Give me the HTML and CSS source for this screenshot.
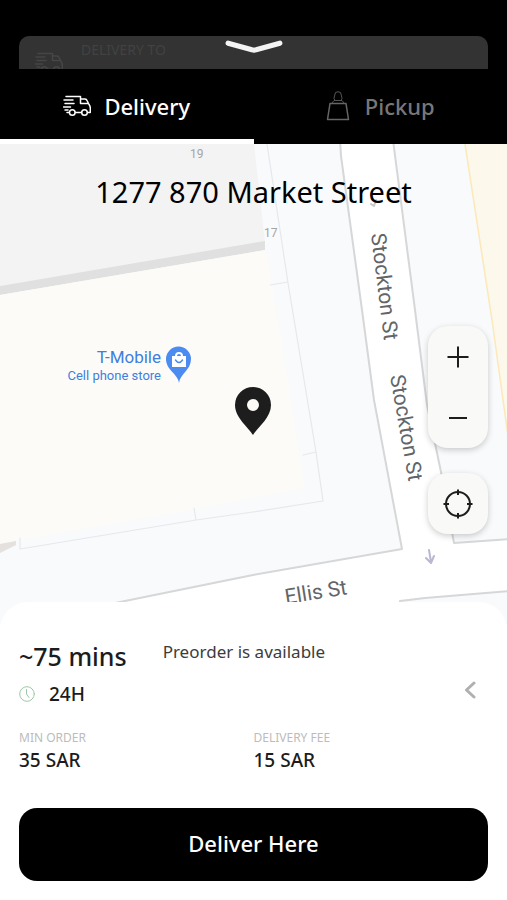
FILE: index.html
```
<!DOCTYPE html>
<html lang="en">
<head>
<meta charset="utf-8">
<meta name="viewport" content="width=device-width, initial-scale=1">
<title>Delivery location</title>
<link rel="stylesheet" href="styles.css">
</head>
<body>
<header class="top">
  <div class="peek">
    <svg class="peek-truck" viewBox="0 0 28 22" aria-hidden="true"><path d="M3 1.500H17.500V8.500H25.500M1 5H10M2 8.500H11M.5 12H7.500M2 15H5M4 17.500H6M17.500 4H22Q23.500 4 24.300 6L26 9.500Q27.300 11 27.300 13V17.500H25M12.500 17.500H18.500"/><circle cx="9.300" cy="17.500" r="2.800"/><circle cx="21.500" cy="17.500" r="2.800"/></svg>
    <span class="peek-label">DELIVERY TO</span>
    <button class="collapse" aria-label="Close"><svg viewBox="0 0 58 16" aria-hidden="true"><path d="M4 4 27 10.500Q29 11 31 10.500L54 4"/></svg></button>
  </div>
</header>
<nav class="tabs">
  <button class="tab active">
    <svg class="truck" viewBox="0 0 28 22" aria-hidden="true"><path d="M3 1.500H17.500V8.500H25.500M1 5H10M2 8.500H11M.5 12H7.500M2 15H5M4 17.500H6M17.500 4H22Q23.500 4 24.300 6L26 9.500Q27.300 11 27.300 13V17.500H25M12.500 17.500H18.500"/><circle cx="9.300" cy="17.500" r="2.800"/><circle cx="21.500" cy="17.500" r="2.800"/></svg>
    <span>Delivery</span>
  </button>
  <button class="tab">
    <svg class="bag" viewBox="0 0 24 30" aria-hidden="true"><path d="M4 12.500H20L22.500 28.500H1.500Z"/><path class="thin" d="M6 12 8 9.500H16L18 12M9 9.500Q7 8 8.500 5L9.500 1.500Q12 0 14.500 1.500L15.500 5Q17 8 15 9.500"/></svg>
    <span>Pickup</span>
  </button>
</nav>
<main>
  <section class="map" aria-label="Map">
    <svg class="map-art" viewBox="0 144 507 480" preserveAspectRatio="xMidYMin slice">
      <rect class="road" y="144" width="507" height="480"/>
      <path class="block" d="M-2 140H340L341 156 362 310 374 400 402 549 253 575 120 602-2 628Z"/>
      <path class="block" d="M393 140 415 310 427 405 441 472 454 543 510 539V140Z"/>
      <path class="block" d="M400 601 425 598 510 591V628H400Z"/>
      <path class="gray-lot" d="M0 144H254L265 242 0 286Z"/>
      <path class="gray-wall" d="M0 286 265 241V250L0 295Z"/>
      <path class="shop" d="M0 295 266 250 305 488 195 509 20 540 0 543Z"/>
      <path class="sand" d="M465 144H507V430L492 320Z"/>
      <path class="sand-line" d="M465 144 492 320 508 436"/>
      <path class="corner-lot" d="M0 544 16 541V545L0 553Z"/>
      <path class="lot-line" d="M267 144 288 283 316 452 323 501 253 512 196 520 20 549V538M270 285 288 282M194 508 196 520M303 455 316 452"/>
      <path class="number-tag" d="M371 204 374 206 376 200"/>
      <path class="arrow" d="M429 550 431 562M426 558 431 563 434 556"/>
      <g class="house-no"><text x="190" y="158">19</text><text x="264" y="237">17</text></g>
      <g class="street">
        <text transform="translate(371 234) rotate(83)">Stockton St</text>
        <text transform="translate(390 376) rotate(80)">Stockton St</text>
        <text transform="translate(286 604) rotate(-9)">Ellis St</text>
      </g>
      <g class="place"><text class="place-name" x="161" y="363">T-Mobile</text><text class="place-kind" x="161" y="380">Cell phone store</text></g>
      <path class="place-pin" d="M179 383C178 374 166 370 166 359A12.500 12.500 0 0 1 191 359C191 370 180 374 179 383Z"/>
      <path class="place-bag" d="M172 356H175Q175 352 179 352T183 356H186V367H172Z"/>
      <path class="place-hole" d="M177 356Q177 354 179 354T181 356Z"/>
      <path class="place-smile" d="M175.500 360Q179 365 182.500 360"/>
      <path class="pin" fill-rule="evenodd" d="M253 435C249 428 235 418 235 405A18 18 0 0 1 271 405C271 418 257 428 253 435ZM253 399A6 6 0 1 0 253 411A6 6 0 1 0 253 399Z"/>
    </svg>
    <h1 class="address">1277 870 Market Street</h1>
    <div class="controls">
      <div class="zoom">
        <button aria-label="Zoom in"><svg viewBox="0 0 24 24" aria-hidden="true"><path d="M12 1.500V22.500M1.500 12H22.500"/></svg></button>
        <button aria-label="Zoom out"><svg viewBox="0 0 24 24" aria-hidden="true"><path d="M3 12H21"/></svg></button>
      </div>
      <button class="locate" aria-label="My location"><svg viewBox="0 0 30 30" aria-hidden="true"><circle cx="15" cy="15" r="12"/><path d="M15 .5V6M15 24V29.500M.5 15H6M24 15H29.500"/></svg></button>
    </div>
  </section>
  <section class="sheet">
    <div class="summary">
      <div class="timing">
        <strong class="eta">~75 mins</strong>
        <span class="preorder">Preorder is available</span>
      </div>
      <div class="hours">
        <svg class="clock" viewBox="0 0 16 16" aria-hidden="true"><circle cx="8" cy="8" r="7.300"/><path d="M7.500 3.500V8L10 11.500"/></svg>
        <span>24H</span>
        <button class="more" aria-label="Details"><svg viewBox="0 0 12 18" aria-hidden="true"><path d="M10 2 2.500 9 10 16"/></svg></button>
      </div>
    </div>
    <dl class="facts">
      <div><dt>MIN ORDER</dt><dd>35 SAR</dd></div>
      <div><dt>DELIVERY FEE</dt><dd>15 SAR</dd></div>
    </dl>
    <button class="submit">Deliver Here</button>
  </section>
</main>
</body>
</html>
```
FILE: styles.css
```
* { box-sizing: border-box; }
body {
  margin: 0;
  background: #fff;
  color: #1c1c1c;
  font-family: "Noto Sans", "Open Sans", sans-serif;
}
button {
  border: 0;
  padding: 0;
  background: none;
  color: inherit;
  font: inherit;
  cursor: pointer;
}
svg { display: block; fill: none; stroke-linecap: round; stroke-linejoin: round; }

.top { padding: 36px 19px 0; background: #000; }
.peek {
  position: relative;
  display: flex;
  gap: 18px;
  height: 33px;
  padding: 4px 16px 0;
  overflow: hidden;
  border-radius: 10px 10px 0 0;
  background: #333;
}
.peek-truck { width: 28px; height: 22px; margin-top: 12px; stroke: #464646; stroke-width: 1.5; flex: none; }
.peek-label { color: #424242; font-size: 14px; line-height: 20px; }
.collapse { position: absolute; top: 3px; left: 50%; width: 60px; transform: translateX(-50%); }
.collapse svg { stroke: #f4f4f4; stroke-width: 5; }

.tabs { display: flex; background: #000; }
.tab {
  display: flex;
  flex: 1;
  align-items: center;
  justify-content: center;
  gap: 13px;
  height: 75px;
  border-bottom: 5px solid #000;
  padding-top: 4px;
  color: #777;
  font-size: 22px;
  font-weight: 500;
  line-height: 30px;
}
.tab.active { border-color: #fff; color: #fff; }
.truck { width: 28px; height: 22px; stroke: #fff; stroke-width: 1.5; }
.bag { width: 24px; height: 30px; stroke: #666; stroke-width: 1.5; margin-right: 2px; }
.bag .thin { stroke: #555; stroke-width: 1; }

.map { position: relative; height: 480px; overflow: hidden; background: #f8fafc; }
.map-art { width: 100%; height: 100%; }
.road { fill: #fff; }
.block { fill: #f8fafc; stroke: #d6d7d9; stroke-width: 2; }
.gray-lot { fill: #f3f3f3; }
.gray-wall { fill: #e0e0e0; }
.shop { fill: #fcfbf7; }
.sand { fill: #fdf8ec; }
.sand-line { stroke: #fce8b8; stroke-width: 1.5; }
.corner-lot { fill: #e4e1de; }
.lot-line { stroke: #e6e8ec; stroke-width: 1.2; }
.number-tag { stroke: #c8c9cc; stroke-width: 2; }
.arrow { stroke: #b9b8d2; stroke-width: 2; }
.house-no { fill: #a5a5a5; font: 12px Roboto, sans-serif; }
.street { fill: #626568; font: 21px Roboto, sans-serif; }
.place { fill: #3f7fe0; font-family: Roboto, sans-serif; text-anchor: end; }
.place-name { font-size: 17px; }
.place-kind { font-size: 13px; }
.place-pin { fill: #4c8bf0; }
.place-bag { fill: #fff; }
.place-hole { fill: #4c8bf0; }
.place-smile { stroke: #4c8bf0; stroke-width: 1.5; }
.pin { fill: #1d1d1d; }

.address {
  position: absolute;
  top: 28px;
  left: 0;
  right: 0;
  margin: 0;
  color: #000;
  font-size: 29px;
  font-weight: 400;
  line-height: 40px;
  text-align: center;
}
.controls { position: absolute; top: 182px; right: 19px; display: grid; gap: 25px; }
.zoom, .locate {
  width: 60px;
  border-radius: 20px;
  background: #f9f9f7;
  box-shadow: 0 2px 6px rgb(0 0 0 / 20%);
}
.zoom button, .locate {
  display: flex;
  align-items: center;
  justify-content: center;
  width: 60px;
  height: 61px;
}
.controls svg { width: 24px; stroke: #1d1d1d; stroke-width: 2; stroke-linecap: butt; }
.controls .locate svg { width: 30px; }

.sheet {
  position: relative;
  margin-top: -22px;
  padding: 36px 19px 18px;
  border-radius: 28px 28px 0 0;
  background: #fff;
}
.timing { display: flex; gap: 36px; }
.eta { font-size: 25px; font-weight: 500; line-height: 36px; }
.preorder { color: #3c3c3c; font-size: 17px; line-height: 28px; }
.hours {
  display: flex;
  align-items: center;
  gap: 14px;
  margin-top: 5px;
  font-size: 19px;
  font-weight: 500;
  line-height: 30px;
}
.clock { width: 16px; stroke: #9cc8a8; stroke-width: 1; }
.more { margin: 0 12px 8px auto; }
.more svg { width: 12px; stroke: #b0b0b0; stroke-width: 3; }
.facts { display: grid; grid-template-columns: 1fr 1fr; margin: 20px 0 34px; }
.facts dt { color: #bcbcbc; font-size: 12px; line-height: 18px; }
.facts dd { margin: 0; font-size: 19px; font-weight: 500; line-height: 27px; }
.submit {
  width: 100%;
  height: 73px;
  padding-bottom: 3px;
  border-radius: 18px;
  background: #000;
  color: #fff;
  font-size: 22px;
  font-weight: 500;
}
```
